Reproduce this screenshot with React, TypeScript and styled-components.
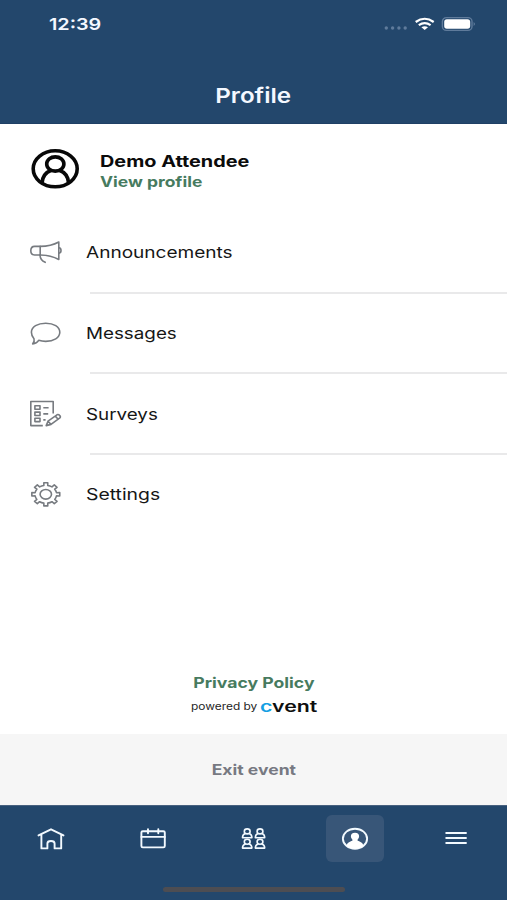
import React from "react";
import styled, { createGlobalStyle } from "styled-components";

const GlobalStyle = createGlobalStyle`
  *, *::before, *::after { box-sizing: border-box; }
  body { margin: 0; background: #fff; font-family: Inter, "Liberation Sans", sans-serif; }
  svg { display: block; flex: none; overflow: visible; }
`;

const navy = "#23476c";

const Screen = styled.div`
  width: 507px;
  height: 900px;
  display: flex;
  flex-direction: column;
  background: #fff;
  overflow: hidden;
`;

const Label = styled.span<{ $size: number; $stretch: number; $weight?: number; $color?: string; $origin?: string; $line?: number }>`
  display: block;
  width: max-content;
  white-space: nowrap;
  font-size: ${(p) => p.$size}px;
  line-height: ${(p) => p.$line ?? 20}px;
  font-weight: ${(p) => p.$weight ?? 400};
  color: ${(p) => p.$color ?? "#161616"};
  transform: scaleX(${(p) => p.$stretch});
  transform-origin: ${(p) => p.$origin ?? "left"} center;
`;

const Header = styled.header`
  height: 124px;
  background: ${navy};
  border-bottom: 1px solid #1f4065;
  display: flex;
  flex-direction: column;
`;

const StatusBar = styled.div`
  height: 48px;
  padding: 1px 32px 0 49px;
  display: flex;
  align-items: center;
  justify-content: space-between;
`;

const Title = styled.div`
  height: 76px;
  padding: 37px 0 0;
  display: flex;
  justify-content: center;
`;

const ProfileRow = styled.section`
  height: 88px;
  padding: 25px 0 0 31px;
  display: flex;
  gap: 21px;
`;

const ProfileText = styled.div`
  padding-top: 3px;
`;

const Menu = styled.ul`
  list-style: none;
  margin: 0;
  padding: 1px 0 0;
  flex: 1;
`;

const MenuItem = styled.li`
  height: 80.6px;
  display: flex;
`;

const IconCell = styled.div`
  width: 90px;
  padding: 19px 0 0 26px;
  flex: none;
`;

const MenuBody = styled.div<{ $divided: boolean }>`
  flex: 1;
  padding: 29.4px 0 0;
  border-bottom: ${(p) => (p.$divided ? "2px solid #e9e9ea" : "none")};

  span { margin-left: -4px; }
`;

const Legal = styled.footer`
  height: 61px;
  display: flex;
  flex-direction: column;
  align-items: center;
`;

const Powered = styled.div`
  width: 126px;
  height: 24px;
  margin-top: 1px;
  display: flex;
`;

const PoweredText = styled.div`
  width: 69px;
`;

const Brand = styled.span`
  color: #0f0f0f;

  b { color: #159fe3; font-weight: inherit; }
`;

const ExitBar = styled.div`
  height: 71px;
  padding-top: 1px;
  background: #f6f6f6;
  display: flex;
  align-items: center;
  justify-content: center;
`;

const TabBar = styled.nav`
  height: 95px;
  background: ${navy};
  border-top: 1px solid #48617f;
`;

const Tabs = styled.div`
  display: grid;
  grid-template-columns: repeat(5, 1fr);
  justify-items: center;
  padding-top: 9px;
`;

const Tab = styled.div<{ $active?: boolean }>`
  width: 58px;
  height: 47px;
  border-radius: 6px;
  background: ${(p) => (p.$active ? "#385678" : "transparent")};
  display: flex;
  align-items: center;
  justify-content: center;
`;

const HomeIndicator = styled.div`
  width: 182px;
  height: 5px;
  margin: 25px auto 0;
  border-radius: 3px;
  background: #4d4d52;
`;

const StatusIcons = () => (
  <svg width="92" height="20" viewBox="0 0 92 20">
    <g fill="#5f7b9b">
      <circle cx="3.3" cy="14" r="1.7" />
      <circle cx="9.6" cy="14" r="1.7" />
      <circle cx="15.9" cy="14" r="1.7" />
      <circle cx="22.2" cy="14" r="1.7" />
    </g>
    <g fill="none" stroke="#fff" strokeWidth="2.2">
      <path d="M32.7 8Q41.7 1.5 50.7 8" />
      <path d="M35.8 11.2Q41.7 7.1 47.6 11.2" />
    </g>
    <path d="M38.4 13.2Q41.7 11.1 45 13.2L41.7 16.1Z" fill="#fff" />
    <rect x="59.4" y="3.6" width="29.6" height="12.8" rx="4" fill="none" stroke="#5f7b9b" strokeWidth="1.4" />
    <rect x="61.2" y="5.2" width="26" height="9.6" rx="2.7" fill="#fff" />
    <path d="M90.6 8Q93.4 10 90.6 12Z" fill="#5f7b9b" />
  </svg>
);

const Avatar = () => (
  <svg width="48" height="40" viewBox="0 0 48 40" fill="none" stroke="#080808" strokeWidth="3.6">
    <ellipse cx="24.2" cy="19.8" rx="22" ry="18" />
    <ellipse cx="24.3" cy="15" rx="8.6" ry="7.1" />
    <path d="M11 34.2C11.3 27 15.8 23 20.3 21.3M28.3 21.3C33 23 37.3 27 37.6 34.2" />
  </svg>
);

const MenuSvg = styled.svg.attrs({ width: 40, height: 40, viewBox: "0 0 40 40" })`
  fill: none;
  stroke: #777b80;
  stroke-width: 1.6;
  stroke-linejoin: round;
  stroke-linecap: round;
`;

const Megaphone = () => (
  <MenuSvg>
    <path d="M14.2 14.4H8.6Q4.8 14.4 4.8 18.8Q4.8 23 8.6 23H14.2Z" />
    <path d="M14.2 14.4Q25 14.2 32.8 10V27.5Q25 23.2 14.2 23" />
    <path d="M33 15.8Q35 16 35 18.6Q35 21 33 21.2M14 23.2Q14.2 28.2 19.2 30.3" />
  </MenuSvg>
);

const Bubble = () => (
  <MenuSvg>
    <path d="M8 25.8Q5.4 22.9 5.4 19.3C5.4 13.8 11.7 10.2 19.7 10.2S33.8 13.8 33.8 19.3S27.7 28.4 19.7 28.4Q15.9 28.4 12.7 27.3Q10.7 30.6 6.7 30.9Q8.8 28.5 8 25.8Z" />
  </MenuSvg>
);

const Survey = () => (
  <MenuSvg>
    <path d="M27.2 20.6V8.5H4.8V32.6H16.8M17.3 14.7H22.6M17.3 20.9H22.2M17.3 26.9H19.6" strokeLinecap="butt" />
    <path d="M8.9 12.8H14V16.2H8.9ZM8.9 19.1H14V22.5H8.9ZM8.9 25.2H14V28.6H8.9Z" />
    <path d="M20.2 32.6L22 28.2L31 21.8Q32.4 21.1 33.6 22.4Q35 23.8 33.9 24.9L25 31.4L20.2 32.6ZM22 28.2L25 31.4M29.2 23.1L32.2 26.2" />
  </MenuSvg>
);

const gearPath = (() => {
  const rx = 14.1;
  const ry = 11.7;
  const root = 0.77;
  const at = (angle: number, radius: number) =>
    `${(19.8 + rx * radius * Math.cos(angle)).toFixed(2)} ${(20.3 + ry * radius * Math.sin(angle)).toFixed(2)}`;
  let d = "";
  for (let i = 0; i < 8; i++) {
    const a = (i * Math.PI) / 4 - Math.PI / 2;
    d += `${i ? "L" : "M"}${at(a - 0.18, root)}L${at(a - 0.14, 1)}L${at(a + 0.14, 1)}L${at(a + 0.18, root)}`;
    d += `A${rx * root} ${ry * root} 0 0 1 ${at(a + Math.PI / 4 - 0.18, root)}`;
  }
  return `${d}Z`;
})();

const Gear = () => (
  <MenuSvg>
    <path d={gearPath} />
    <ellipse cx="19.8" cy="20.3" rx="5.7" ry="4.8" />
  </MenuSvg>
);

const TabSvg = styled.svg.attrs({ width: 32, height: 28, viewBox: "0 0 32 28" })`
  fill: none;
  stroke: #f3faff;
  stroke-width: 1.9;
  stroke-linejoin: round;
  stroke-linecap: round;
`;

const House = () => (
  <TabSvg>
    <path d="M3.5 10.4L16 4.3L28.5 10.4M6.4 9.8V23.4H12.4V18.5Q12.4 16 16 16Q19.6 16 19.6 18.5V23.4H26.2V9.8" />
  </TabSvg>
);

const Calendar = () => (
  <TabSvg>
    <rect x="5.4" y="6.2" width="23.4" height="16.2" rx="1.4" />
    <path d="M5.4 11.9H28.8M12 4.2V8.2M22.3 4.2V8.2" />
  </TabSvg>
);

const people: [number, number][] = [[10.2, 3.9], [23, 3.9], [10.2, 14.3], [23, 14.3]];

const People = () => (
  <TabSvg>
    {people.map(([x, y]) => (
      <g key={`${x}-${y}`} strokeWidth="1.6">
        <ellipse cx={x} cy={y + 2.5} rx="2.9" ry="2.5" />
        <path d={`M${x - 2} ${y + 4.7}Q${x - 4.7} ${y + 5.6} ${x - 4.7} ${y + 8.8}H${x + 4.7}Q${x + 4.7} ${y + 5.6} ${x + 2} ${y + 4.7}`} />
      </g>
    ))}
  </TabSvg>
);

const Person = () => (
  <TabSvg>
    <ellipse cx="16" cy="13.7" rx="12.1" ry="10" />
    <path d="M16 7.7C13.3 7.7 11.7 9.2 11.9 11.4C12 12.9 12.8 13.7 13.4 14.4V15.7C10.6 16.7 8.2 17.4 7.5 20.7Q11 23.7 16 23.7T24.5 20.7C23.8 17.4 21.4 16.7 18.6 15.7V14.4C19.2 13.7 20 12.9 20.1 11.4C20.3 9.2 18.7 7.7 16 7.7Z" fill="#fff" stroke="none" />
  </TabSvg>
);

const Hamburger = () => (
  <TabSvg>
    <path d="M6.2 8H26M6.2 13H26M6.2 18H26" />
  </TabSvg>
);

const items = [
  { name: "Announcements", icon: <Megaphone />, stretch: 1.19 },
  { name: "Messages", icon: <Bubble />, stretch: 1.175 },
  { name: "Surveys", icon: <Survey />, stretch: 1.175 },
  { name: "Settings", icon: <Gear />, stretch: 1.21 },
];

export default function App() {
  return (
    <>
      <GlobalStyle />
      <Screen>
        <Header>
          <StatusBar>
            <Label $size={16.5} $stretch={1.2} $weight={600} $color="#f4f8ff">12:39</Label>
            <StatusIcons />
          </StatusBar>
          <Title>
            <Label $size={20.5} $stretch={1.18} $weight={600} $color="#f4f8ff" $origin="center" $line={24}>Profile</Label>
          </Title>
        </Header>
        <ProfileRow>
          <Avatar />
          <ProfileText>
            <Label $size={15.7} $stretch={1.265} $weight={700} $color="#0b0b0b">Demo Attendee</Label>
            <Label $size={14.5} $stretch={1.205} $weight={700} $color="#477b5f">View profile</Label>
          </ProfileText>
        </ProfileRow>
        <Menu>
          {items.map((item, i) => (
            <MenuItem key={item.name}>
              <IconCell>{item.icon}</IconCell>
              <MenuBody $divided={i < items.length - 1}>
                <Label $size={16} $stretch={item.stretch}>{item.name}</Label>
              </MenuBody>
            </MenuItem>
          ))}
        </Menu>
        <Legal>
          <Label $size={14.5} $stretch={1.215} $weight={700} $color="#477b5f" $origin="center">Privacy Policy</Label>
          <Powered>
            <PoweredText>
              <Label $size={10} $stretch={1.19} $color="#242424" $line={24}>powered by</Label>
            </PoweredText>
            <Label $size={15} $stretch={1.42} $weight={600} $line={25}><Brand><b>c</b>vent</Brand></Label>
          </Powered>
        </Legal>
        <ExitBar>
          <Label $size={14.5} $stretch={1.21} $weight={700} $color="#777982" $origin="center">Exit event</Label>
        </ExitBar>
        <TabBar>
          <Tabs>
            <Tab><House /></Tab>
            <Tab><Calendar /></Tab>
            <Tab><People /></Tab>
            <Tab $active><Person /></Tab>
            <Tab><Hamburger /></Tab>
          </Tabs>
          <HomeIndicator />
        </TabBar>
      </Screen>
    </>
  );
}
